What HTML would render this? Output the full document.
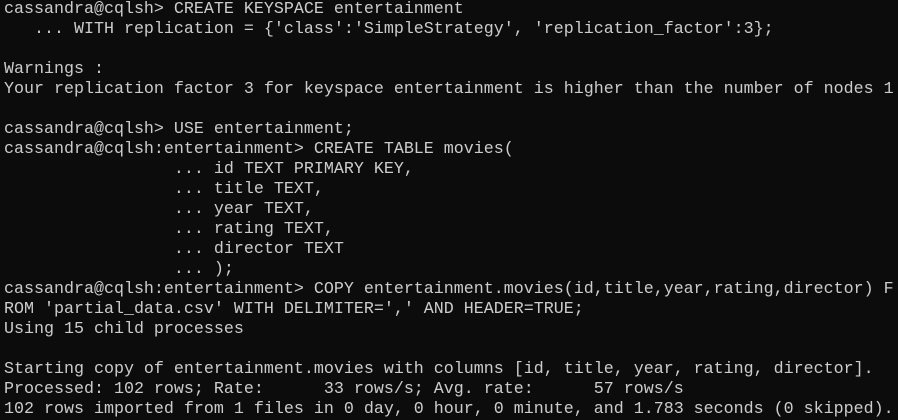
<!DOCTYPE html>
<html><head><meta charset="utf-8"><style>
html,body{margin:0;padding:0;background:#0c0c0c;width:898px;height:420px;overflow:hidden}
pre{margin:0;padding:0 0 0 4px;color:#cccccc;font-family:"Liberation Mono",monospace;font-size:16.67px;line-height:20px;white-space:pre}
</style></head><body><pre>cassandra@cqlsh&gt; CREATE KEYSPACE entertainment
   ... WITH replication = {'class':'SimpleStrategy', 'replication_factor':3};

Warnings :
Your replication factor 3 for keyspace entertainment is higher than the number of nodes 1

cassandra@cqlsh&gt; USE entertainment;
cassandra@cqlsh:entertainment&gt; CREATE TABLE movies(
                 ... id TEXT PRIMARY KEY,
                 ... title TEXT,
                 ... year TEXT,
                 ... rating TEXT,
                 ... director TEXT
                 ... );
cassandra@cqlsh:entertainment&gt; COPY entertainment.movies(id,title,year,rating,director) F
ROM 'partial_data.csv' WITH DELIMITER=',' AND HEADER=TRUE;
Using 15 child processes

Starting copy of entertainment.movies with columns [id, title, year, rating, director].
Processed: 102 rows; Rate:      33 rows/s; Avg. rate:      57 rows/s
102 rows imported from 1 files in 0 day, 0 hour, 0 minute, and 1.783 seconds (0 skipped).</pre></body></html>
